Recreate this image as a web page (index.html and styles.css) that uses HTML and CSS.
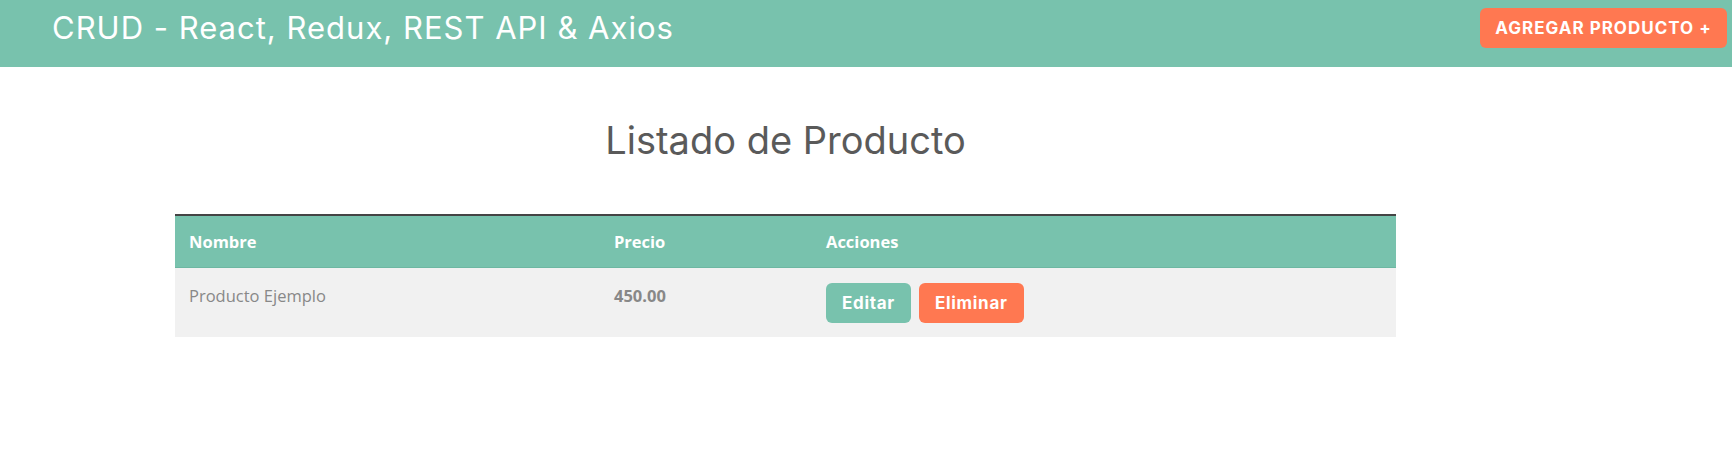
FILE: index.html
```html
<!DOCTYPE html>
<html lang="es">
<head>
<meta charset="utf-8">
<title>CRUD - React, Redux, REST API &amp; Axios</title>
<link rel="stylesheet" href="styles.css">
</head>
<body>
<header class="navbar">
  <h1 class="brand">CRUD - React, Redux, REST API &amp; Axios</h1>
  <a class="btn btn-danger btn-add" href="#">Agregar Producto +</a>
</header>
<main class="page">
  <div class="content">
    <h2 class="title">Listado de Producto</h2>
    <table class="table">
      <thead>
        <tr>
          <th class="col-name">Nombre</th>
          <th class="col-price">Precio</th>
          <th class="col-actions">Acciones</th>
        </tr>
      </thead>
      <tbody>
        <tr>
          <td>Producto Ejemplo</td>
          <td class="price">450.00</td>
          <td>
            <div class="actions">
              <a class="btn btn-primary" href="#">Editar</a>
              <button class="btn btn-danger" type="button">Eliminar</button>
            </div>
          </td>
        </tr>
      </tbody>
    </table>
  </div>
</main>
</body>
</html>
```

FILE: styles.css
```css
* { box-sizing: border-box; }

body {
  margin: 0;
  background: #fff;
  font-family: "Open Sans", "Liberation Sans", sans-serif;
  color: #888;
}

.navbar {
  display: flex;
  justify-content: space-between;
  align-items: flex-start;
  height: 67px;
  padding: 8px 5px 0 52px;
  background: #78c2ad;
}

.brand {
  margin: 0;
  font-family: Inter, "Open Sans", sans-serif;
  font-weight: 400;
  font-size: 31px;
  line-height: 40px;
  color: #fff;
  letter-spacing: 1px;
}

.btn {
  display: inline-flex;
  align-items: center;
  justify-content: center;
  height: 40px;
  padding: 0 16px;
  border: 0;
  border-radius: 6px;
  font-family: Inter, "Open Sans", sans-serif;
  font-weight: 700;
  font-size: 17px;
  letter-spacing: 0.7px;
  color: #fff;
  text-decoration: none;
  cursor: pointer;
}

.btn-primary { background: #78c2ad; }
.btn-danger { background: #ff7851; }

.btn-add {
  width: 247px;
  text-transform: uppercase;
  font-size: 17px;
  letter-spacing: 1px;
  padding: 0;
}

.page {
  padding-left: 175px;
}

.content {
  width: 1221px;
}

.title {
  margin: 49px 0 50px;
  text-align: center;
  font-family: Inter, "Open Sans", sans-serif;
  font-weight: 400;
  font-size: 38px;
  line-height: 48px;
  color: #5a5a5a;
}

.table {
  width: 100%;
  border-collapse: collapse;
  border-top: 2px solid #444;
  table-layout: fixed;
}

.table th {
  background: #78c2ad;
  color: #fff;
  font-weight: 700;
  font-size: 16.5px;
  line-height: 26px;
  text-align: left;
  padding: 13px 14px 12px;
  border-bottom: 1px solid #6db7a2;
}

.col-name { width: 425px; }
.col-price { width: 212px; }
.col-actions { width: 584px; }

.table td {
  background: #f1f1f1;
  font-size: 16.5px;
  line-height: 26px;
  padding: 15px 14px 14px;
  vertical-align: top;
  color: #888;
}

.table td.price {
  font-weight: 700;
}

.actions {
  display: flex;
  gap: 8px;
}
```
